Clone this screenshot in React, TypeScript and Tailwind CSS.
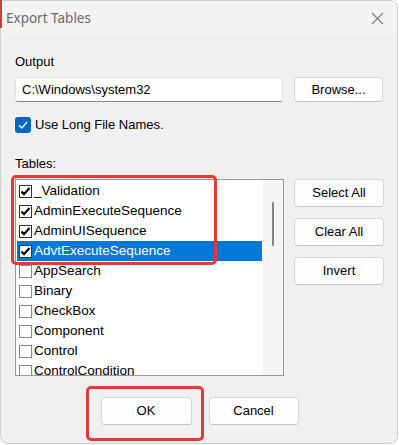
import React from 'react';

const ITEMS = [
  { name: '_Validation', checked: true },
  { name: 'AdminExecuteSequence', checked: true },
  { name: 'AdminUISequence', checked: true },
  { name: 'AdvtExecuteSequence', checked: true, selected: true },
  { name: 'AppSearch', checked: false },
  { name: 'Binary', checked: false },
  { name: 'CheckBox', checked: false },
  { name: 'Component', checked: false },
  { name: 'Control', checked: false },
  { name: 'ControlCondition', checked: false },
];

function Button({ label, className = '' }: { label: string; className?: string }) {
  return (
    <button
      className={`flex items-center justify-center rounded-[4px] border border-[#d6d6d6] border-b-[#c4c4c4] bg-[#fdfdfd] text-[13px] text-black ${className}`}
    >
      {label}
    </button>
  );
}

function ClassicBox({ checked }: { checked: boolean }) {
  return (
    <span
      className={`flex h-[13px] w-[13px] shrink-0 items-center justify-center border bg-white ${
        checked ? 'border-[#333333]' : 'border-[#8a8a8a]'
      }`}
    >
      {checked && (
        <svg width="11" height="11" viewBox="0 0 11 11">
          <polyline points="1.5,5.5 4,8.2 9.5,2" fill="none" stroke="#000" strokeWidth="2.2" />
        </svg>
      )}
    </span>
  );
}

export default function App() {
  return (
    <div
      className="relative h-[445px] w-[399px] overflow-hidden bg-white"
      style={{ fontFamily: '"Liberation Sans", Arial, sans-serif' }}
    >
      {/* sliver of the window behind */}
      <div className="absolute left-0 top-0 h-[28px] w-[2px] bg-[#c84040]" />

      <div className="flex h-[444px] w-[398px] flex-col overflow-hidden rounded-tr-[8px] rounded-b-[8px] border border-[#cfcfcf] bg-[#f0f0f0]">
        {/* Title bar */}
        <div className="flex h-[34px] shrink-0 items-center justify-between bg-[#f3f3f3] pl-[5px] pr-[13px]">
          <span
            className="text-[13.5px] text-[#6a6a6a]"
            style={{ fontFamily: '"Noto Sans", "Open Sans", sans-serif' }}
          >
            Export Tables
          </span>
          <svg width="13" height="13" viewBox="0 0 13 13">
            <path d="M1 1 L12 12 M12 1 L1 12" stroke="#7a7a7a" strokeWidth="1.1" fill="none" />
          </svg>
        </div>

        {/* Body */}
        <div className="flex flex-col pl-[14px] pr-[13px]">
          <div className="mt-[19px] h-[15px] text-[13px] leading-[15px] text-black">Output</div>

          <div className="mt-[8px] flex h-[25px] items-stretch gap-[11px]">
            <div className="flex w-[268px] items-center rounded-[3px] border border-[#e2e2e2] border-b-[#8a8a8a] bg-white pl-[6px] text-[13px] text-black">
              C:\Windows\system32
            </div>
            <Button label="Browse..." className="w-[89px]" />
          </div>

          <div className="mt-[15px] flex h-[16px] items-center gap-[4px]">
            <span className="flex h-[16px] w-[16px] items-center justify-center rounded-[3px] bg-[#0067c0]">
              <svg width="12" height="12" viewBox="0 0 12 12">
                <polyline points="2,6.2 4.8,9 10,3" fill="none" stroke="#fff" strokeWidth="1.3" />
              </svg>
            </span>
            <span className="text-[13px] text-black">Use Long File Names.</span>
          </div>

          <div className="mt-[23px] h-[15px] text-[13px] leading-[15px] text-black">Tables:</div>

          <div className="mt-[8px] flex gap-[10px]">
            {/* List box */}
            <div className="flex h-[197px] w-[269px] border border-[#999999] bg-white">
              <div className="flex flex-1 flex-col overflow-hidden p-[1px] text-[13.5px]">
                {ITEMS.map((it) => (
                  <div
                    key={it.name}
                    className={`flex h-[20px] shrink-0 items-center gap-[2px] pl-[2px] ${
                      it.selected ? 'bg-[#0078d7] text-white' : 'text-black'
                    }`}
                  >
                    <ClassicBox checked={it.checked} />
                    <span className="whitespace-nowrap">{it.name}</span>
                  </div>
                ))}
              </div>
              <div className="flex w-[20px] shrink-0 justify-center bg-[#f4f4f4] pt-[22px]">
                <div className="h-[44px] w-[2px] rounded-full bg-[#858585]" />
              </div>
            </div>

            {/* Side buttons */}
            <div className="flex flex-col gap-[11px]">
              <Button label="Select All" className="h-[28px] w-[90px]" />
              <Button label="Clear All" className="h-[28px] w-[90px]" />
              <Button label="Invert" className="h-[28px] w-[90px]" />
            </div>
          </div>
        </div>

        <div className="mt-[21px] flex justify-center gap-[17px] pl-[1px]">
          <Button label="OK" className="h-[28px] w-[91px]" />
          <Button label="Cancel" className="h-[28px] w-[90px]" />
        </div>
      </div>

      {/* Red annotation boxes */}
      <div className="absolute left-[11px] top-[175px] h-[90px] w-[206px] rounded-[5px] border-[3px] border-[#e53935]" />
      <div className="absolute left-[86px] top-[386px] h-[55px] w-[118px] rounded-[5px] border-[3px] border-[#e53935]" />
    </div>
  );
}
